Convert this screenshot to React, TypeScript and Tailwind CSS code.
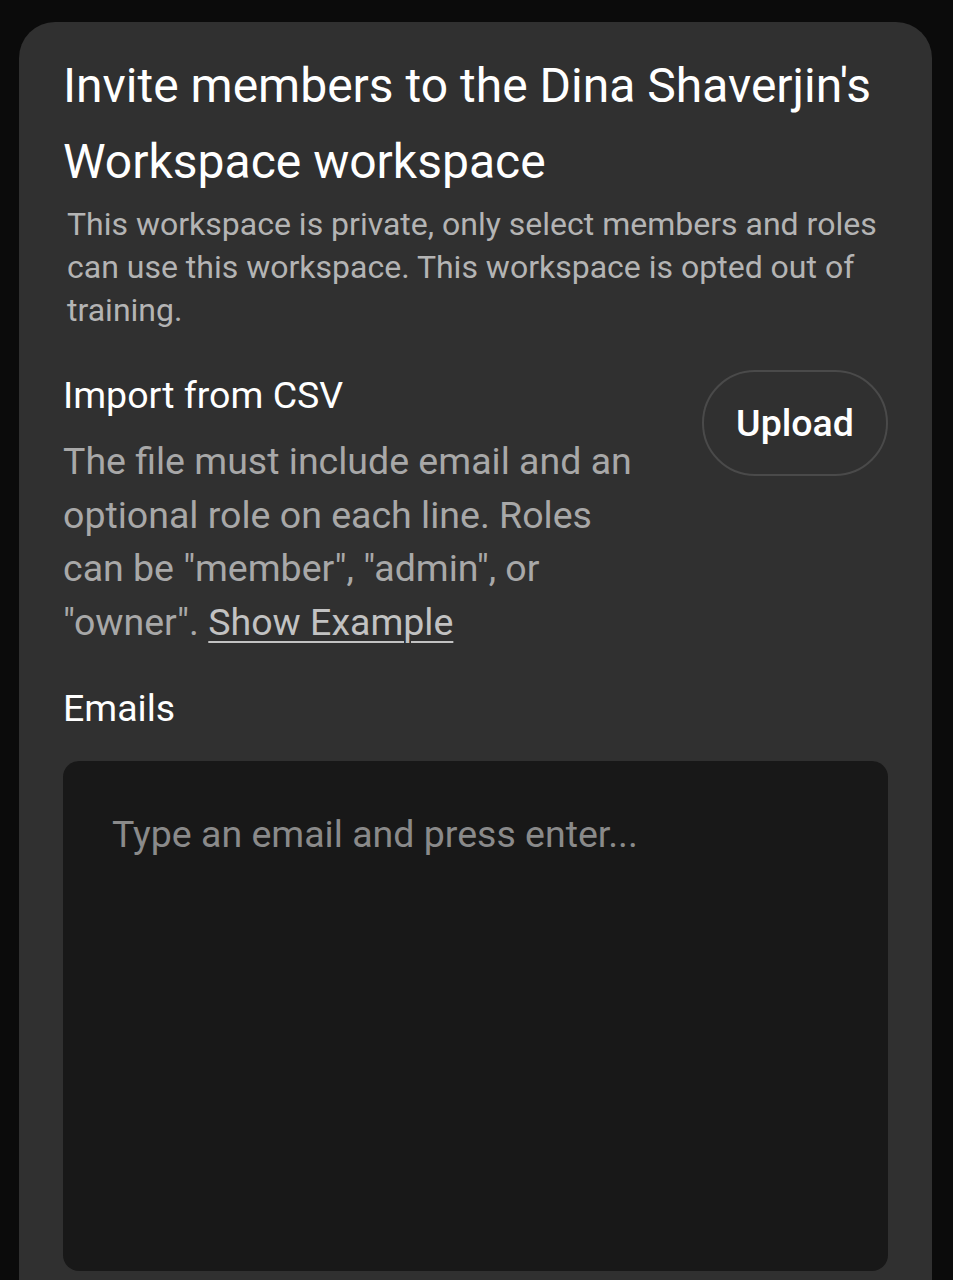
export default function App() {
  return (
    <div className="min-h-screen bg-[#0b0b0b] pl-[19px] pr-[21px] pt-[22px] font-['Roboto',sans-serif]">
      <div className="h-[1300px] rounded-t-[36px] bg-[#303030] px-[44px] pt-[26px]">
        <h1 className="text-[48px] leading-[76px] text-white">
          Invite members to the Dina Shaverjin's Workspace workspace
        </h1>
        <p className="mt-[3px] pl-[4px] text-[32px] leading-[43px] text-[#b4b4b4]">
          This workspace is private, only select members and roles can use this workspace. This
          workspace is opted out of training.
        </p>

        <div className="mt-[38px] flex items-start justify-between">
          <div className="w-[585px]">
            <div className="text-[37.5px] leading-[50px] text-white">Import from CSV</div>
            <p className="mt-[15px] text-[37.5px] leading-[53.5px] text-[#a8a8a8]">
              The file must include email and an optional role on each line. Roles can be
              "member", "admin", or "owner".{" "}
              <span className="text-[#c2c2c2] underline decoration-2 underline-offset-[6px]">
                Show Example
              </span>
            </p>
          </div>
          <button className="h-[106px] w-[186px] shrink-0 rounded-full border-2 border-[#4a4a4a] text-[37.5px] font-medium text-white">
            Upload
          </button>
        </div>

        <div className="mt-[34px] text-[37.5px] leading-[50px] text-white">Emails</div>
        <div className="mt-[28px] h-[510px] rounded-[16px] bg-[#181818] px-[49px] pt-[48px]">
          <div className="text-[37.5px] leading-[50px] text-[#8a8a8a]">
            Type an email and press enter...
          </div>
        </div>
      </div>
    </div>
  );
}
